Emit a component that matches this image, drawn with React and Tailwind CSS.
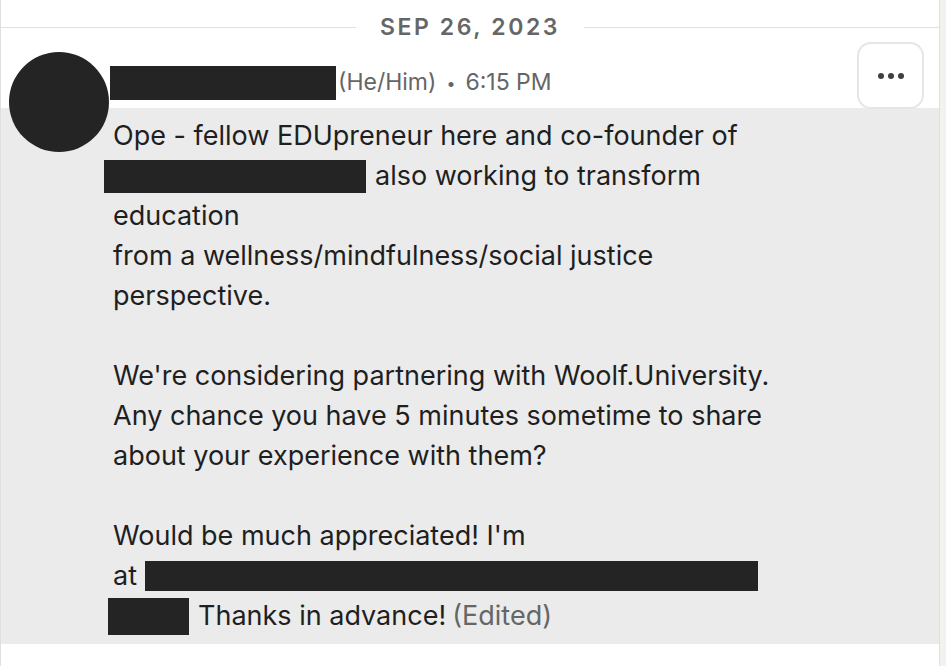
export default function App() {
  const font = { fontFamily: 'Inter, "Noto Sans", sans-serif' };
  return (
    <div className="w-[946px] h-[666px] bg-[#f3f2ef] flex overflow-hidden" style={font}>
      <div className="w-[940px] h-full bg-white border-l border-r border-[#e0dfdc] flex flex-col">
        {/* Date divider */}
        <div className="flex items-center h-[54px]">
          <div className="flex-1 h-px bg-[#e0e0e0]" />
          <span className="px-[24px] text-[23px] font-semibold tracking-[2.6px] text-[#666666] leading-none">SEP 26, 2023</span>
          <div className="flex-1 h-px bg-[#e0e0e0]" />
        </div>

        {/* Header */}
        <div className="relative h-[54px] flex items-center">
          <div className="absolute left-[8px] top-[-2px] w-[100px] h-[100px] rounded-full bg-[#242424] z-10" />
          <div className="ml-[109px] mt-[3px] flex items-center">
            <div className="w-[226px] h-[34px] bg-[#242424]" />
            <span className="ml-[2px] text-[23px] text-[#666666]">(He/Him)</span>
            <span className="mx-[10px] text-[16px] text-[#666666]">•</span>
            <span className="text-[23px] text-[#666666]">6:15 PM</span>
          </div>
          <button className="absolute left-[856px] top-[-12px] w-[67px] h-[67px] rounded-[14px] border-2 border-[#e6e6e6] bg-white flex items-center justify-center gap-[4px]">
            <span className="w-[6px] h-[6px] rounded-full bg-[#404040]" />
            <span className="w-[6px] h-[6px] rounded-full bg-[#404040]" />
            <span className="w-[6px] h-[6px] rounded-full bg-[#404040]" />
          </button>
        </div>

        {/* Message */}
        <div className="bg-[#ebebeb] h-[536px] pl-[112px] pt-[8px] text-[27px] leading-[40px] text-[#1f1f1f]">
          <div>Ope - fellow EDUpreneur here and co-founder of</div>
          <div className="flex items-center">
            <span className="ml-[-9px] w-[262px] h-[33px] bg-[#242424]" />
            <span className="ml-[9px]">also working to transform</span>
          </div>
          <div>education</div>
          <div>from a wellness/mindfulness/social justice</div>
          <div>perspective.</div>
          <div className="h-[40px]" />
          <div>We're considering partnering with Woolf.University.</div>
          <div>Any chance you have 5 minutes sometime to share</div>
          <div>about your experience with them?</div>
          <div className="h-[40px]" />
          <div>Would be much appreciated! I'm</div>
          <div className="flex items-center">
            <span>at</span>
            <span className="ml-[8px] w-[613px] h-[30px] bg-[#242424]" />
          </div>
          <div className="flex items-center">
            <span className="ml-[-5px] w-[81px] h-[37px] bg-[#242424]" />
            <span className="ml-[9px]">Thanks in advance!</span>
            <span className="ml-[6px] text-[#666666]">(Edited)</span>
          </div>
        </div>
      </div>
    </div>
  );
}
